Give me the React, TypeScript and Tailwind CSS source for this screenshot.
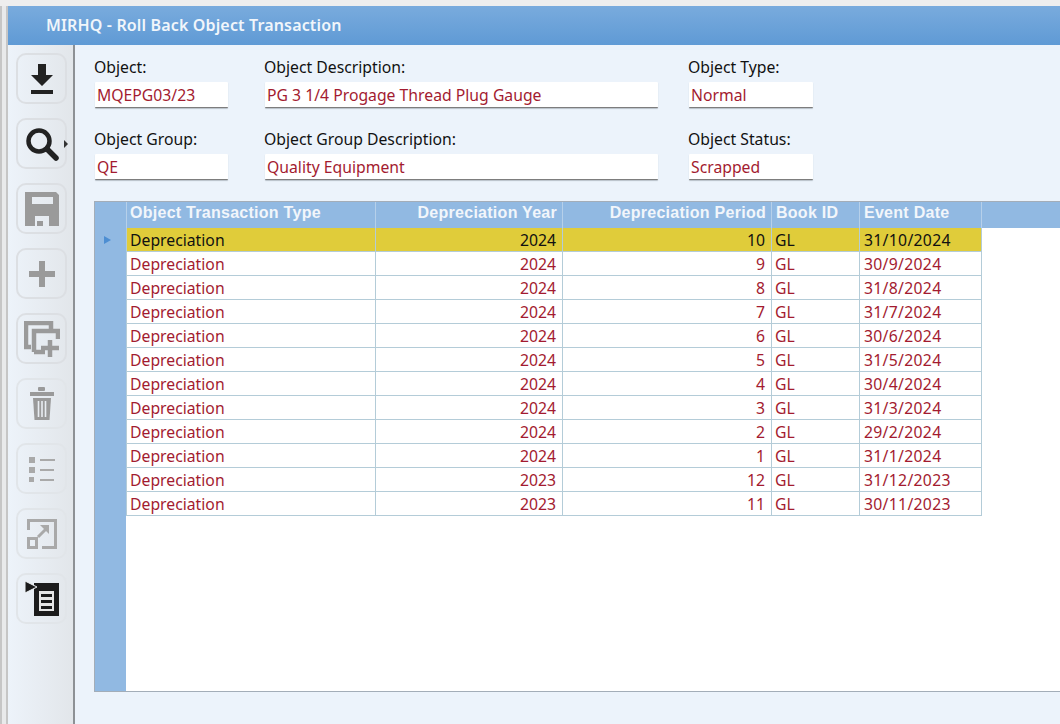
const rows = [
  ["2024", "10", "31/10/2024"],
  ["2024", "9", "30/9/2024"],
  ["2024", "8", "31/8/2024"],
  ["2024", "7", "31/7/2024"],
  ["2024", "6", "30/6/2024"],
  ["2024", "5", "31/5/2024"],
  ["2024", "4", "30/4/2024"],
  ["2024", "3", "31/3/2024"],
  ["2024", "2", "29/2/2024"],
  ["2024", "1", "31/1/2024"],
  ["2023", "12", "31/12/2023"],
  ["2023", "11", "30/11/2023"],
];

function Field({ label, value, labelW, inputW }: { label: string; value: string; labelW: string; inputW: string }) {
  return (
    <div className={`flex flex-col ${labelW}`}>
      <div className="h-[37px] pt-[12px] text-[15.75px] leading-[20px] text-[#111]">{label}</div>
      <div className={`ml-px h-[26px] ${inputW} bg-white border-b border-[#7d7d7d] rounded-[1px] pl-[2px] text-[15.75px] leading-[27px] text-[#a31b30] shadow-[0_1px_1px_#b8c0c8]`}>{value}</div>
    </div>
  );
}

function Btn({ children, arrow, light }: { children: React.ReactNode; arrow?: boolean; light?: boolean }) {
  return (
    <div className={`relative w-[51px] h-[51px] rounded-[10px] border-2 flex items-center justify-center ${light ? "border-[#e1e5e9]" : "border-[#dcdfe3]"}`}>
      {children}
      {arrow && <span className="absolute right-[-3px] top-[20px] w-0 h-0 border-y-[4px] border-y-transparent border-l-[4px] border-l-[#333]" />}
    </div>
  );
}

const G = "#9a9a9a";

export default function App() {
  return (
    <div className="w-[1060px] h-[724px] overflow-hidden bg-[#eeeeee] flex flex-col font-['Noto_Sans','DejaVu_Sans',sans-serif]">
      <div className="h-[6px] shrink-0 bg-[#eeeeee]" />
      <div className="flex-1 flex min-h-0">
        <div className="w-[8px] shrink-0 bg-[#e9eaeb] border-l-[2px] border-r-[2px] border-[#c6c6c6]" />
        <div className="flex-1 flex flex-col min-w-0">
          <div className="h-[39px] shrink-0 bg-gradient-to-b from-[#79abdd] to-[#5f9ad5] pl-[38px] text-[16px] font-semibold leading-[39px] text-[#f1f6fb] tracking-[0.15px]">
            MIRHQ - Roll Back Object Transaction
          </div>
          <div className="flex-1 flex min-h-0">
            <div className="w-[67px] shrink-0 bg-gradient-to-r from-[#edf3fa] to-[#e2e6ea] border-r-2 border-[#8d9195] pl-[8px] pt-[8px] flex flex-col gap-[14px]">
              <Btn>
                <svg width="26" height="32" viewBox="0 0 26 32"><path d="M9 1h8v11h7L13 23 2 12h7z" fill="#222"/><rect x="2" y="27" width="22" height="4" fill="#222"/></svg>
              </Btn>
              <Btn arrow>
                <svg width="34" height="34" viewBox="0 0 34 34"><circle cx="14" cy="14" r="10.5" fill="none" stroke="#222" strokeWidth="4.5"/><path d="M22 22l9 9" stroke="#222" strokeWidth="5.5" strokeLinecap="round"/></svg>
              </Btn>
              <Btn>
                <svg width="34" height="34" viewBox="0 0 34 34"><path fillRule="evenodd" d="M0 0h31l3 3v31H24V24H10v10H0zM7 5v7h21V5z" fill={G}/><rect x="12" y="29" width="6" height="5" fill={G}/></svg>
              </Btn>
              <Btn>
                <svg width="28" height="28" viewBox="0 0 28 28"><path d="M11 1h6v10h10v6H17v10h-6V17H1v-6h10z" fill={G}/></svg>
              </Btn>
              <Btn>
                <svg width="36" height="36" viewBox="0 0 36 36" fill="none" stroke={G} strokeWidth="4.5"><path d="M7 26H2V2h25v6"/><path d="M10 31V10h24v8M10 31h11"/><path d="M26 19v17M17 27h18" strokeWidth="4.5"/></svg>
              </Btn>
              <Btn light>
                <svg width="26" height="34" viewBox="0 0 26 34"><rect x="9" y="0" width="7" height="4" rx="1" fill={G}/><rect x="1" y="5" width="24" height="4" fill={G}/><path d="M4 11h18l-1.500 22H5.500z" fill={G}/><path d="M9.500 14v16M13 14v16M16.500 14v16" stroke="#e9edf2" strokeWidth="1.600"/></svg>
              </Btn>
              <Btn light>
                <svg width="26" height="26" viewBox="0 0 26 26" fill="#a9a9a9"><rect x="0" y="1" width="6" height="6"/><rect x="0" y="11" width="6" height="6"/><rect x="0" y="21" width="5" height="5"/><rect x="11" y="3" width="15" height="2"/><rect x="11" y="13" width="14" height="2"/><rect x="11" y="23" width="14" height="2"/></svg>
              </Btn>
              <Btn light>
                <svg width="30" height="30" viewBox="0 0 30 30" fill="none" stroke="#a9a9a9" strokeWidth="3"><path d="M1.500 11V1.500h27v27H15"/><rect x="1.500" y="19.500" width="8" height="9"/><path d="M11 18l8-8"/><path d="M13 6h9v9z" fill="#a9a9a9" stroke="none"/></svg>
              </Btn>
              <Btn light>
                <svg width="34" height="36" viewBox="0 0 34 36"><rect x="9" y="2" width="25" height="33" fill="#1c1c1c"/><path d="M0 0l12 6L0 12z" fill="#1c1c1c" stroke="#f0f3f6" strokeWidth="1"/><rect x="14" y="10" width="15" height="20" fill="#e6e6e6"/><rect x="16" y="13" width="11" height="3" fill="#1c1c1c"/><rect x="16" y="19" width="11" height="3" fill="#1c1c1c"/><rect x="16" y="25" width="11" height="3" fill="#1c1c1c"/></svg>
              </Btn>
            </div>
            <div className="flex-1 bg-[#ecf3fb] pl-[19px] flex flex-col min-w-0">
              <div className="flex">
                <Field label="Object:" value="MQEPG03/23" labelW="w-[170px]" inputW="w-[133px]" />
                <Field label="Object Description:" value="PG 3 1/4 Progage Thread Plug Gauge" labelW="w-[424px]" inputW="w-[393px]" />
                <Field label="Object Type:" value="Normal" labelW="w-[200px]" inputW="w-[124px]" />
              </div>
              <div className="flex mt-[9px]">
                <Field label="Object Group:" value="QE" labelW="w-[170px]" inputW="w-[133px]" />
                <Field label="Object Group Description:" value="Quality Equipment" labelW="w-[424px]" inputW="w-[393px]" />
                <Field label="Object Status:" value="Scrapped" labelW="w-[200px]" inputW="w-[124px]" />
              </div>
              <div className="mt-[21px] h-[491px] bg-white border-l border-b border-[#a3adb8] flex">
                <div className="w-[31px] shrink-0 bg-[#91b9e2] border-t border-[#a3adb8] pt-[26px]">
                  <div className="h-[24px] flex items-center justify-center pr-[6px]">
                    <span className="w-0 h-0 border-y-[4px] border-y-transparent border-l-[7px] border-l-[#4d8ed2]" />
                  </div>
                </div>
                <div className="flex-1 min-w-0 flex flex-col">
                  <div className="h-[27px] shrink-0 bg-[#91b9e2] border-t border-[#a3adb8] flex font-['Liberation_Sans',sans-serif] text-[16px] font-bold leading-[22px] tracking-[0.27px] text-[#f2f6fb]">
                    <div className="w-[250px] pl-[3px] border-l border-r border-[#b6d0ea]">Object Transaction Type</div>
                    <div className="w-[187px] pr-[5px] text-right border-r border-[#b6d0ea]">Depreciation Year</div>
                    <div className="w-[209px] pr-[5px] text-right border-r border-[#b6d0ea]">Depreciation Period</div>
                    <div className="w-[88px] pl-[4px] border-r border-[#b6d0ea]">Book ID</div>
                    <div className="w-[122px] pl-[4px] border-r border-[#b6d0ea]">Event Date</div>
                  </div>
                  <div className="w-[856px] text-[15.75px] leading-[25px]">
                    {rows.map((r, i) => {
                      const c = i === 0 ? "bg-[#e0cc3a] text-[#111]" : "text-[#a31b30]";
                      return (
                        <div key={i} className={`flex h-[24px] border-b border-[#b4ccd8] ${c}`}>
                          <div className="w-[250px] pl-[3px] border-l border-r border-[#b4ccd8]">Depreciation</div>
                          <div className="w-[187px] pr-[6px] text-right border-r border-[#b4ccd8]">{r[0]}</div>
                          <div className="w-[209px] pr-[6px] text-right border-r border-[#b4ccd8]">{r[1]}</div>
                          <div className="w-[88px] pl-[3px] border-r border-[#b4ccd8]">GL</div>
                          <div className="w-[122px] pl-[4px] border-r border-[#b4ccd8] tracking-[0.3px]">{r[2]}</div>
                        </div>
                      );
                    })}
                  </div>
                </div>
              </div>
            </div>
          </div>
        </div>
      </div>
    </div>
  );
}
